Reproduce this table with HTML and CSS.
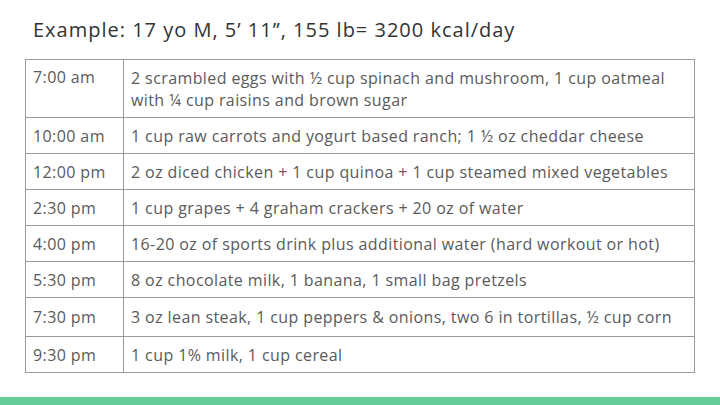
FILE: index.html
```html
<!DOCTYPE html>
<html>
<head>
<meta charset="utf-8">
<link rel="stylesheet" href="styles.css">
</head>
<body>
<div class="page">
  <h1 class="title">Example: 17 yo M, 5’ 11”, 155 lb= 3200 kcal/day</h1>
  <table class="plan">
    <tr class="tall"><td class="time">7:00 am</td><td class="meal">2 scrambled eggs with ½ cup spinach and mushroom, 1 cup oatmeal<br>with ¼ cup raisins and brown sugar</td></tr>
    <tr><td class="time">10:00 am</td><td class="meal">1 cup raw carrots and yogurt based ranch; 1 ½ oz cheddar cheese</td></tr>
    <tr><td class="time">12:00 pm</td><td class="meal">2 oz diced chicken + 1 cup quinoa + 1 cup steamed mixed vegetables</td></tr>
    <tr><td class="time">2:30 pm</td><td class="meal">1 cup grapes + 4 graham crackers + 20 oz of water</td></tr>
    <tr><td class="time">4:00 pm</td><td class="meal">16-20 oz of sports drink plus additional water (hard workout or hot)</td></tr>
    <tr><td class="time">5:30 pm</td><td class="meal">8 oz chocolate milk, 1 banana, 1 small bag pretzels</td></tr>
    <tr class="mid"><td class="time">7:30 pm</td><td class="meal">3 oz lean steak, 1 cup peppers &amp; onions, two 6 in tortillas, ½ cup corn</td></tr>
    <tr><td class="time">9:30 pm</td><td class="meal">1 cup 1% milk, 1 cup cereal</td></tr>
  </table>
  <div class="spacer"></div>
  <div class="bar"></div>
</div>
</body>
</html>
```
FILE: styles.css
```css
html, body {
  margin: 0;
  padding: 0;
  background: #ffffff;
}
.page {
  width: 720px;
  height: 405px;
  display: flex;
  flex-direction: column;
  font-family: "Open Sans", Lato, sans-serif;
  overflow: hidden;
}
.title {
  margin: 0;
  padding: 18px 0 0 33px;
  height: 40px;
  box-sizing: border-box;
  font-size: 20px;
  line-height: 24px;
  font-weight: 400;
  color: #333333;
  letter-spacing: 1px;
  white-space: nowrap;
}
.plan {
  margin: 19px 0 0 25px;
  width: 670px;
  border-collapse: collapse;
  font-size: 16px;
  letter-spacing: 0.4px;
  color: #5a5a5a;
}
.plan td {
  box-sizing: border-box;
  border: 1px solid #9a9a9a;
  padding: 0 7px;
  height: 36px;
  line-height: 22px;
  vertical-align: middle;
  white-space: nowrap;
}
.plan tr.tall td { height: 58px; }
.plan tr.tall td.time { vertical-align: top; padding-top: 6px; }
.plan tr.mid td { height: 39px; }
.plan td.time { width: 98px; }
.spacer { flex: 1; }
.bar {
  height: 8px;
  background: #66cc99;
}
```
